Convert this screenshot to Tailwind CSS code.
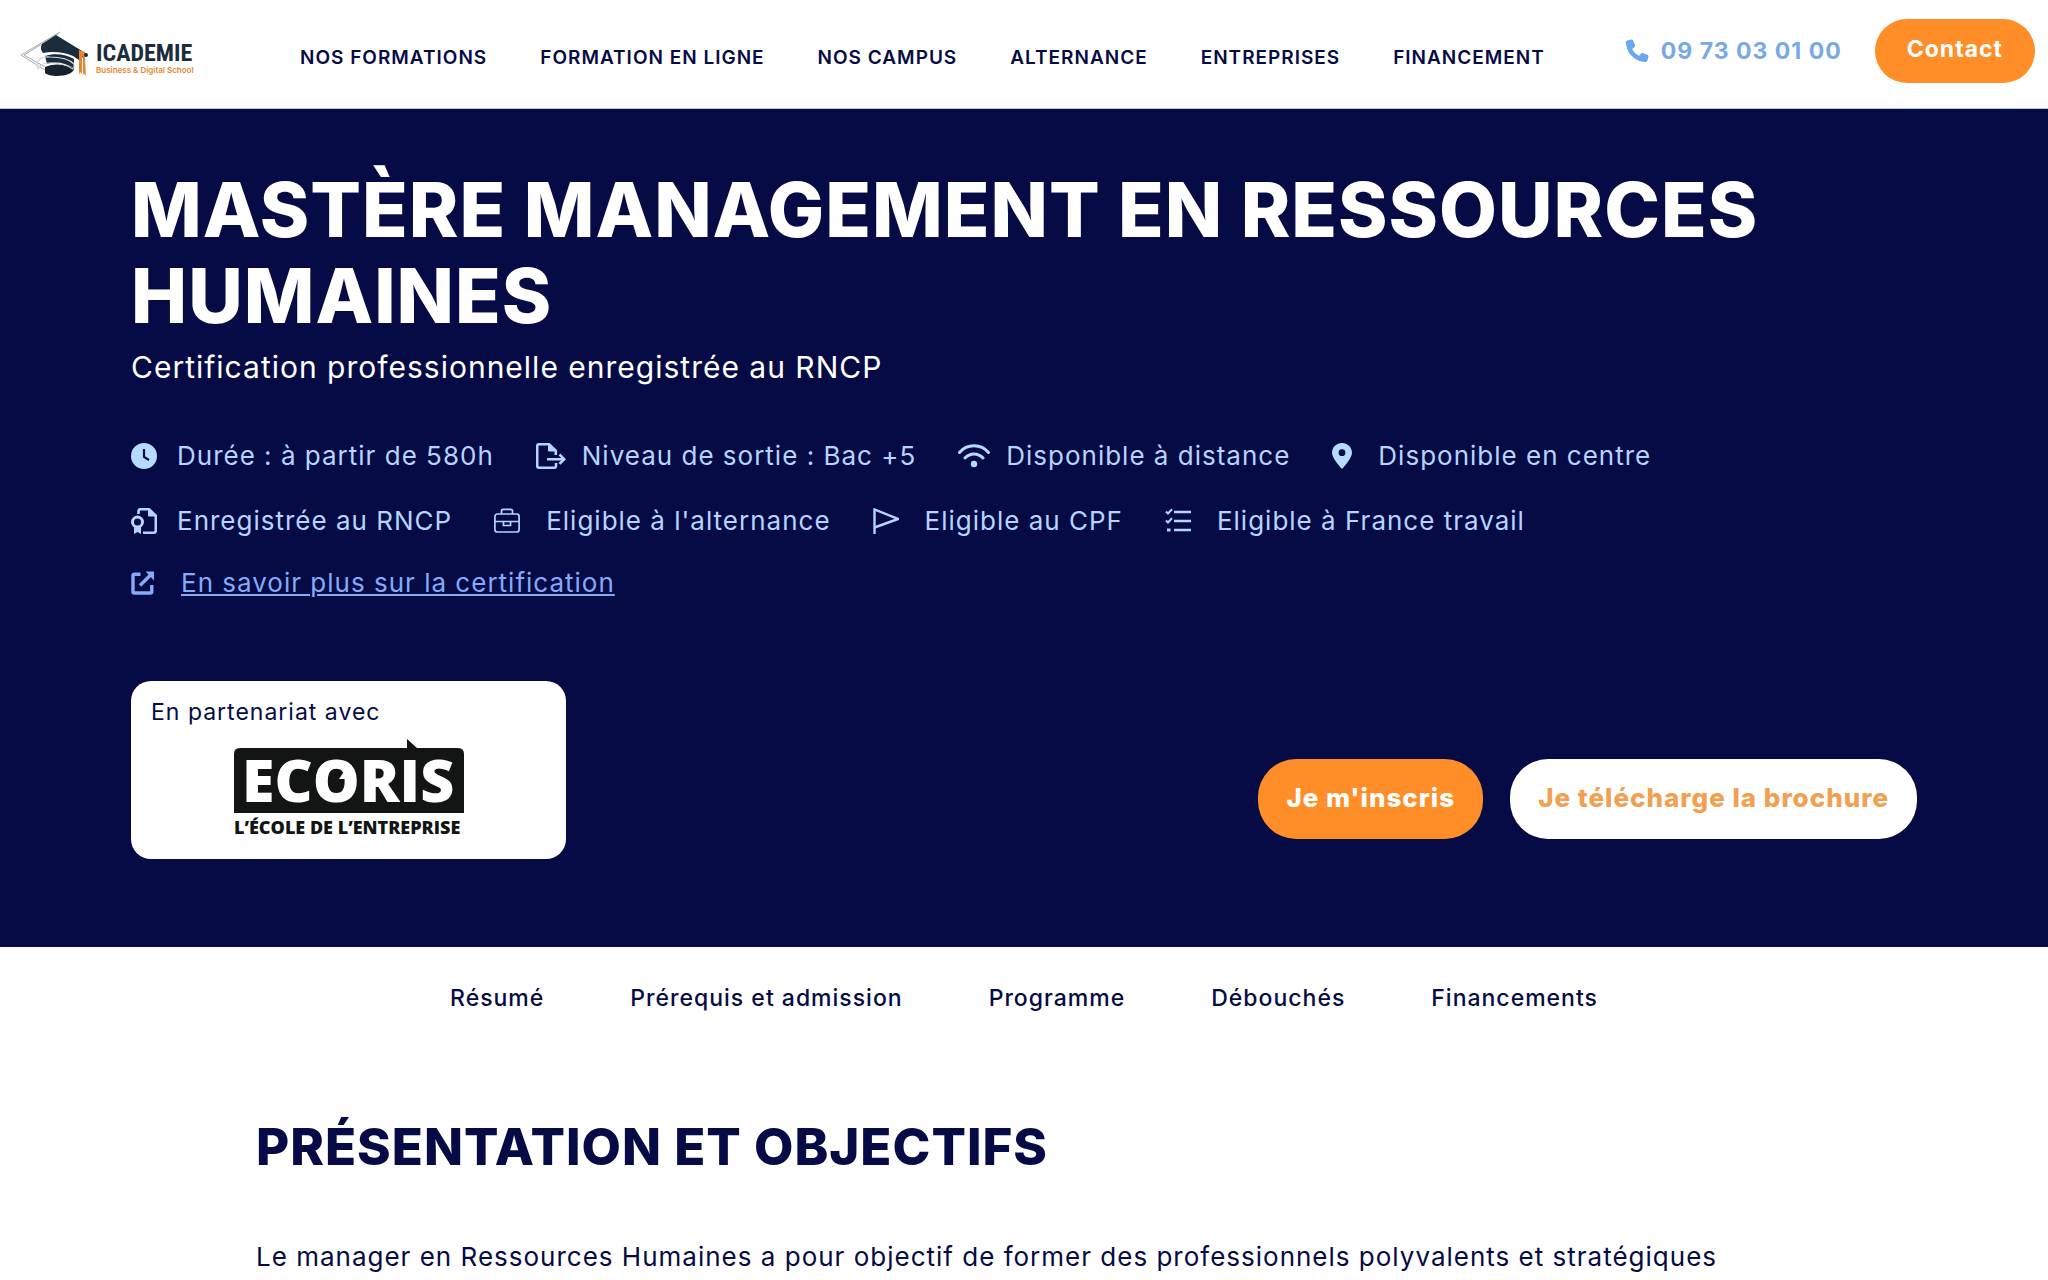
<!DOCTYPE html>
<html lang="fr">
<head>
    <meta charset="UTF-8">
    <meta name="viewport" content="width=device-width, initial-scale=1.0">
    <title>Mastère Management en Ressources Humaines - Icademie</title>
    <script src="https://cdn.jsdelivr.net/npm/@tailwindcss/browser@4"></script>
</head>
<body class="bg-white font-[Inter,sans-serif] text-[#060b45] tracking-[1px] overflow-x-hidden">
    <!-- Header -->
    <header class="flex h-[109px] items-center border-b border-[#b9c3dc] pl-5 pr-[13px]">
        <a href="#" class="shrink-0" aria-label="Icademie">
            <svg class="h-12 w-[180px] tracking-normal" viewBox="0 0 180 48">
                <path d="M40 2 1 25l24 15M38 4 4 25l21 12" fill="none" stroke="#8d969c" stroke-width=".8"/>
                <path d="M22 14 36 5l31 19-8 6-6-4c-9-4-20-5-30-3-2-3-3-5-1-9z" fill="#1b2d3c"/>
                <path d="M25 26c9-3 21-2 29 3v9c-9-5-18-7-27-4z" fill="#1b2d3c"/>
                <path d="M25 37c9-4 20-3 29 1 0 9-24 10-29 5z" fill="#14222e"/>
                <path d="M18 39c-3-7 2-13 12-12 11 0 19 2 24 7v5M18 39c3-6 8-6 12-6 9 0 17 2 23 6" fill="none" stroke="#d5d9dc" stroke-width="1.2"/>
                <path d="m59 20 6 2v6l1 18-2-3-1 3V27l-1-1v18l-2-2-1 3z" fill="#e58633"/>
                <circle cx="66" cy="25" r="2" fill="#1b2d3c"/>
                <text x="76" y="31" font-size="24" font-weight="700" fill="#1b2d3c" font-family="'Roboto Condensed','Liberation Sans Narrow',sans-serif">ICADEMIE</text>
                <text x="76" y="43" font-size="8" font-weight="600" fill="#e58633" font-family="Inter,sans-serif">Business &amp; Digital School</text>
            </svg>
        </a>
        <nav class="ml-[100px] flex gap-[53px] pt-2 text-[19px] font-semibold whitespace-nowrap">
            <a href="#">NOS FORMATIONS</a>
            <a href="#">FORMATION EN LIGNE</a>
            <a href="#">NOS CAMPUS</a>
            <a href="#">ALTERNANCE</a>
            <a href="#">ENTREPRISES</a>
            <a href="#">FINANCEMENT</a>
        </nav>
        <div class="mb-1.5 ml-auto flex items-center gap-[33px] whitespace-nowrap">
            <a href="tel:0973030100" class="flex items-center gap-3 text-[23px] font-bold text-[#78a9e6]">
                <svg class="size-6" viewBox="0 0 24 24" fill="#6ca6ee"><path d="M2.3 1.5 6.2.6c.8-.2 1.6.2 1.9.9L10 6.100c.3.7.1 1.4-.5 1.900L7.3 9.900c1.400 3 3.800 5.400 6.800 6.800l1.900-2.300c.5-.6 1.200-.8 1.900-.5l4.600 1.900c.7.3 1.100 1.100.9 1.900l-1 3.900c-.2.8-.8 1.300-1.600 1.300C9.800 22.900 1 14.200 1 3.100c0-.8.5-1.400 1.300-1.600z"/></svg>
                09 73 03 01 00
            </a>
            <button class="h-16 rounded-[32px] bg-[#ff8d28] px-8 pb-1 text-[23px] font-bold text-white">Contact</button>
        </div>
    </header>

    <!-- Hero -->
    <section class="bg-[#060b45] px-[131px] pt-[58px] pb-[88px]">
        <h1 class="text-[75px] leading-[86px] font-extrabold text-white">MASTÈRE MANAGEMENT EN RESSOURCES HUMAINES</h1>
        <p class="mt-1.5 text-[30px] leading-[44px] text-white">Certification professionnelle enregistrée au RNCP</p>

        <ul class="mt-[47px] flex flex-wrap gap-x-[42px] gap-y-[25px] text-[26px] leading-10 text-[#b5d4ff]">
            <li class="flex items-center gap-5">
                <svg class="size-[26px]" viewBox="0 0 26 26"><circle cx="13" cy="13" r="13" fill="#b5dcff"/><path d="M13 6v8l5 3" fill="none" stroke="#060b45" stroke-width="2.2"/></svg>
                Durée : à partir de 580h
            </li>
            <li class="flex items-center gap-4">
                <svg class="h-[26px] w-[30px]" viewBox="0 0 30 26" fill="none" stroke="#b5d4ff" stroke-width="2.6"><path d="M20 20v3q0 1.800-2 1.800H3.200q-2 0-2-2V3.200q0-2 2-2H13l6.800 6.500V12"/><path d="M12.500 1.500V8H20z" fill="#b5d4ff" stroke-width="1"/><path d="M11 16.200h17M23.500 11.500l4.700 4.700-4.700 4.700"/></svg>
                Niveau de sortie : Bac +5
            </li>
            <li class="flex items-center gap-4">
                <svg class="h-6 w-8" viewBox="0 0 32 24" fill="none" stroke="#b5dcff" stroke-width="3" stroke-linecap="round"><path d="M1.500 8.500C9-.5 23-.5 30.500 8.500M7 14c5-5.500 13-5.500 18 0"/><circle cx="16" cy="20" r="3.2" fill="#b5dcff" stroke="none"/></svg>
                Disponible à distance
            </li>
            <li class="flex items-center gap-[26px]">
                <svg class="h-[26px] w-5" viewBox="0 0 20 26"><path d="M10 0c5.500 0 10 4.300 10 9.700C20 14.500 13.500 22 10 26 6.500 22 0 14.500 0 9.700 0 4.300 4.500 0 10 0zm0 6.300a3.400 3.400 0 1 0 0 6.800 3.400 3.400 0 0 0 0-6.800z" fill="#b5dcff"/></svg>
                Disponible en centre
            </li>
            <li class="flex items-center gap-5">
                <svg class="size-[26px]" viewBox="0 0 26 26" fill="none" stroke="#b5d4ff" stroke-width="2.6"><path d="M7.500 6V3.200q0-2 2-2H18l6.800 6.500v15q0 2-2 2H12"/><path d="M17.500 1.500V8H25z" fill="#b5d4ff" stroke-width="1"/><circle cx="6.500" cy="14" r="5" stroke-width="3"/><path d="M3 18v8l3.500-2 3.500 2v-8z" fill="#b5d4ff" stroke="none"/></svg>
                Enregistrée au RNCP
            </li>
            <li class="flex items-center gap-[26px]">
                <svg class="size-[26px]" viewBox="0 0 26 26" fill="none" stroke="#b5d4ff" stroke-width="1.7"><rect x=".9" y="6" width="24.2" height="18" rx="2.5"/><path d="M7.500 6V3q0-1.700 1.700-1.700h7.600q1.700 0 1.700 1.700v3M1 13.500h24M9.500 13.500h7v4h-7z"/></svg>
                Eligible à l'alternance
            </li>
            <li class="flex items-center gap-[26px]">
                <svg class="size-[26px]" viewBox="0 0 26 26" fill="none" stroke="#b5d4ff" stroke-width="2.4"><path d="M1.500 26V1.500L25 11 1.500 19.500"/></svg>
                Eligible au CPF
            </li>
            <li class="flex items-center gap-[26px]">
                <svg class="size-[26px]" viewBox="0 0 26 26" fill="none" stroke="#b5d4ff" stroke-width="2.6"><path d="M9 4h17M9 13h17M9 22h17"/><path d="m1 3.500 2 2 4-4.300M1 12.500l2 2 4-4.300" stroke-width="2"/><path d="M2 22h3.500" stroke-width="3"/></svg>
                Eligible à France travail
            </li>
        </ul>
        <a href="#" class="mt-[22px] flex w-fit items-center gap-[26px] text-[26px] leading-10 text-[#84aaf8]">
            <svg class="size-6" viewBox="0 0 24 24" fill="none" stroke="#84aaf8" stroke-width="3.4"><path d="M9.500 3.200H3.500q-1.500 0-1.500 1.500v15.800q0 1.500 1.500 1.500h15.800q1.500 0 1.500-1.500V14M9 14.500 20.500 3"/><path d="M14.500.5H23v9z" fill="#84aaf8" stroke="none"/></svg>
            <span class="underline">En savoir plus sur la certification</span>
        </a>

        <div class="mt-[78px] flex items-end justify-between">
            <div class="h-[178px] w-[435px] rounded-[20px] bg-white px-5 pt-4 text-[23px] leading-[30px]">
                <p>En partenariat avec</p>
                <svg class="mx-auto mt-3 h-[102px] w-[232px] tracking-normal" viewBox="0 0 232 102" aria-label="Ecoris, l'école de l'entreprise">
                    <path d="M7 9h167V0l10 9h41q6 0 6 6v59H1V15q0-6 6-6z" fill="#121514"/>
                    <text x="9" y="63" font-size="59" font-weight="800" fill="#fff" font-family="'Open Sans',sans-serif">ECORIS</text>
                    <path d="m112 31-6 9h10z" fill="#fff"/>
                    <text x="1" y="95" font-size="18" font-weight="800" fill="#121514" font-family="'Open Sans',sans-serif">L’ÉCOLE DE L’ENTREPRISE</text>
                </svg>
            </div>
            <div class="mb-5 flex gap-[27px] text-[26px] font-extrabold">
                <button class="h-20 rounded-[38px] bg-[#ff8d28] px-7 pb-1 text-white">Je m'inscris</button>
                <button class="h-20 rounded-[38px] bg-white px-7 pb-1 text-[#f0a050]">Je télécharge la brochure</button>
            </div>
        </div>
    </section>

    <!-- Section tabs -->
    <nav class="flex justify-center gap-[86px] py-9 text-[23px] leading-[30px] font-medium">
        <a href="#resume">Résumé</a>
        <a href="#prerequis">Prérequis et admission</a>
        <a href="#programme">Programme</a>
        <a href="#debouches">Débouchés</a>
        <a href="#financements">Financements</a>
    </nav>

    <!-- Presentation -->
    <main id="resume" class="px-[12.5%] pt-[66px]">
        <h2 class="text-[51px] leading-[64px] font-extrabold">PRÉSENTATION ET OBJECTIFS</h2>
        <p class="mt-[58px] text-[26px] leading-10">Le manager en Ressources Humaines a pour objectif de former des professionnels polyvalents et stratégiques</p>
    </main>
</body>
</html>
